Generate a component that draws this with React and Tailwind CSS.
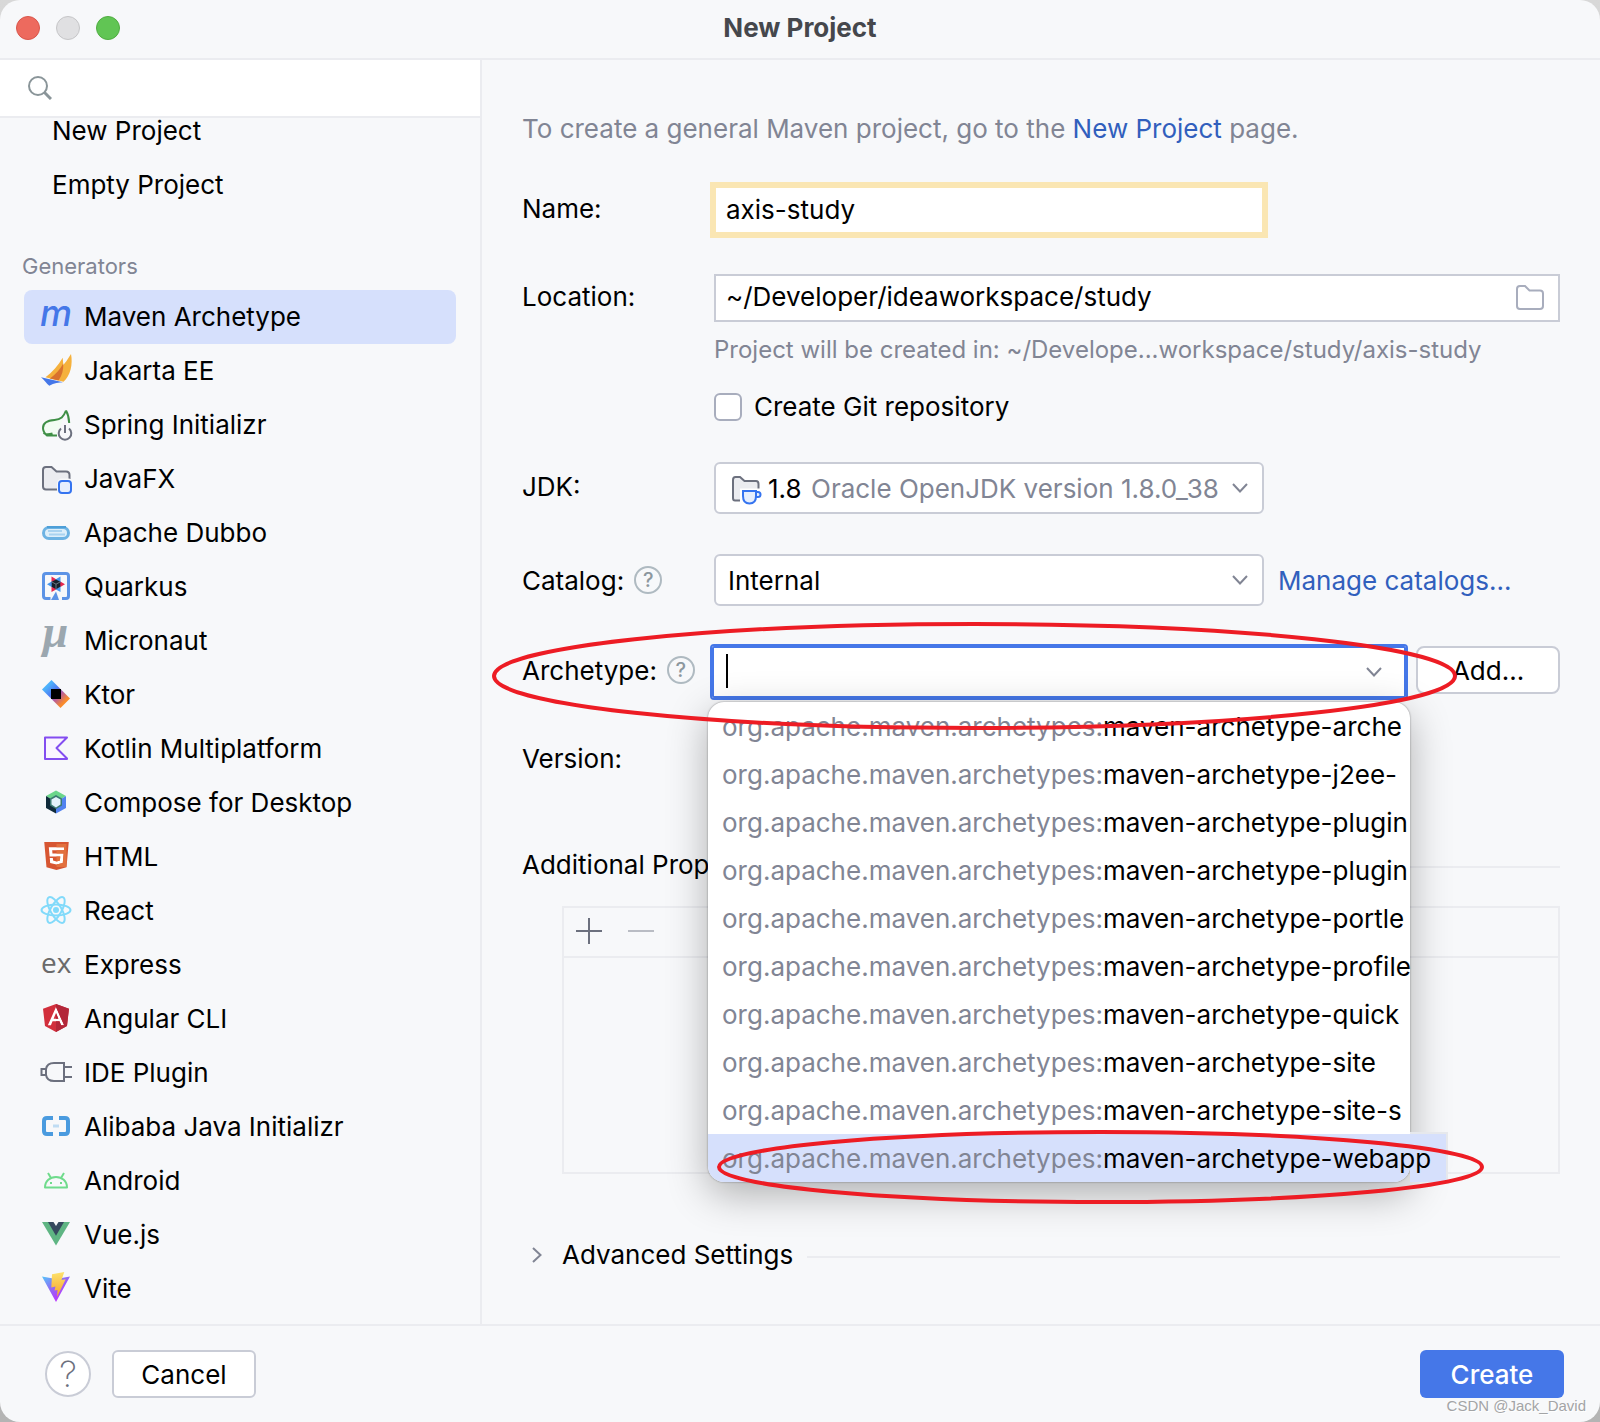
import React, { useState } from "react";
import { FaAngular } from "react-icons/fa";
import { SiHtml5 } from "react-icons/si";

// --- Generator icons ---
const Icon = ({ children }) => (
  <svg viewBox="0 0 32 32" className="size-8 shrink-0 overflow-visible" fill="none" aria-hidden="true">
    {children}
  </svg>
);

const MavenIcon = () => (
  <Icon>
    <text x="0" y="25" fontFamily="Inter, sans-serif" fontStyle="italic" fontWeight="500" fontSize="36" fill="#4577e8">m</text>
  </Icon>
);

const JakartaIcon = () => (
  <Icon>
    <path d="M31 -1C33 9 30.500 21 23.500 26.700L10 23.500C18 17 25 9 31 -1Z" fill="#f5b13d" />
    <path d="M22.700 2.700L23.300 10L12 24L5.500 22.300C12 17 18.500 10.500 22.700 2.700Z" fill="#f5b13d" />
    <path d="M23.300 8.500C23.500 15 22 21 18.500 25.500L10 23.500C15.500 19.500 20 14.500 23.300 8.500Z" fill="#d9722e" />
    <path d="M1 22.300L23 27.300C19 27.500 14 28 9.300 30.800C6.500 28.500 4.500 25.500 1 22.300Z" fill="#4577e8" />
  </Icon>
);

const SpringIcon = () => (
  <Icon>
    <path
      d="M26 1.500C23.500 8 21 10.500 14.500 11C6.500 11.500 3 14 3 19C3 22 4.500 24.500 7 26.500H17M26 1.500C28 5 29 9 29.200 14M3.500 24C6 26 9 25.500 12.500 24.500"
      stroke="#3f8f46"
      strokeWidth="2"
      fill="#f2fcf3"
    />
    <circle cx="25" cy="24.500" r="8" fill="#f7f8fa" />
    <path d="M21 19.500A6.300 6.300 0 1 0 29 19.500M25 16V24" stroke="#6c707e" strokeWidth="2" />
  </Icon>
);

const JavaFxIcon = () => (
  <Icon>
    <path
      d="M18 26.500H6Q3 26.500 3 23.500V7Q3 4 6 4H11.500L16.500 8.500H26Q29.500 8.500 29.500 12V16"
      stroke="#6c707e"
      strokeWidth="2"
      fill="#ebecf0"
    />
    <rect x="17" y="15.500" width="16" height="16" rx="5" fill="#f7f8fa" />
    <rect x="19" y="18" width="12" height="12" rx="3" fill="#e7effd" stroke="#3574f0" strokeWidth="2" />
  </Icon>
);

const DubboIcon = () => (
  <Icon>
    <rect x="3.500" y="10.500" width="25" height="11" rx="5.500" fill="#ddeffa" stroke="#6db3e3" strokeWidth="3" />
    <path d="M8 14H22M9 17.500H25" stroke="#a9d3f0" strokeWidth="2" />
    <path d="M7 10H26" stroke="#4d9fd8" strokeWidth="2" />
  </Icon>
);

const QuarkusIcon = () => (
  <Icon>
    <path d="M10.500 27.500H6Q3.500 27.500 3.500 25V5Q3.500 2.500 6 2.500H26Q28.500 2.500 28.500 5V25Q28.500 27.500 26 27.500H22" stroke="#5c93e6" strokeWidth="3" />
    <path d="M11 29L16 20.500L19 29Z" fill="#5c93e6" />
    <path d="M11.500 5.500L17 8.700L11.500 12ZM25 13.300L19.500 10V16.600ZM11.500 21V14.600L17 18Z" fill="#e8284f" />
    <path d="M20.500 5.500L15 8.700L20.500 12ZM7 13.300L12.500 10V16.600ZM20.500 21V14.600L15 18Z" fill="#4695eb" />
    <path d="M16 8.500L20.300 10.800V15.800L16 18.300L11.700 15.800V10.800Z" fill="#15202b" />
    <path d="M12 11L16 13.200L20 11M16 13.200V18" stroke="#7f8b99" strokeWidth="0.800" />
  </Icon>
);

const MicronautIcon = () => (
  <Icon>
    <text x="2" y="22" fontFamily="Liberation Serif, serif" fontStyle="italic" fontWeight="700" fontSize="46" fill="#9ba7af">µ</text>
  </Icon>
);

const KtorIcon = () => (
  <Icon>
    <defs>
      <linearGradient id="ktor" x1="4" y1="4" x2="27" y2="27" gradientUnits="userSpaceOnUse">
        <stop offset="0.150" stopColor="#4db1fb" />
        <stop offset="0.400" stopColor="#4f7bf2" />
        <stop offset="0.600" stopColor="#b45ba0" />
        <stop offset="0.850" stopColor="#f98b2c" />
      </linearGradient>
    </defs>
    <path d="M11.500 1L30 19.500L20.500 29L2 10.500Z" fill="url(#ktor)" />
    <rect x="11" y="10" width="10" height="10" fill="#000" />
  </Icon>
);

const KotlinIcon = () => (
  <Icon>
    <path d="M5 4.500H27L16.500 15L27 25.500V26H5Z" stroke="#834df0" strokeWidth="2" strokeLinejoin="round" fill="#faf5ff" />
  </Icon>
);

const ComposeIcon = () => (
  <Icon>
    <path d="M16 3.500L26 9L16 15L6 9Z" fill="#6bd68b" />
    <path d="M26 9V21L16 26.500V15Z" fill="#5283f0" />
    <path d="M6 9L16 15V26.500L6 21Z" fill="#0f2a3a" />
    <path d="M16 8L22 11.500V18.500L16 22L10 18.500V11.500Z" fill="#3c7a72" />
    <path d="M16 10L20.500 12.500V17.500L16 20.500L11.500 17.500V12.500Z" fill="#e4f2fb" />
  </Icon>
);

const HtmlIcon = () => (
  <Icon>
    <defs>
      <clipPath id="html-right"><rect x="16.500" y="3" width="10" height="23" /></clipPath>
    </defs>
    <path d="M8 6H25L23 23L16.500 26L10 23Z" fill="#fff" />
    <SiHtml5 x="2.500" y="1" size="28" color="#d75632" />
    <g clipPath="url(#html-right)">
      <SiHtml5 x="2.500" y="1" size="28" color="#e2703d" />
    </g>
  </Icon>
);

const ReactIcon = () => (
  <Icon>
    <g stroke="#82dafa" strokeWidth="2">
      <ellipse cx="16" cy="15" rx="14.500" ry="5.500" />
      <ellipse cx="16" cy="15" rx="14.500" ry="5.500" transform="rotate(60 16 15)" />
      <ellipse cx="16" cy="15" rx="14.500" ry="5.500" transform="rotate(120 16 15)" />
    </g>
    <circle cx="16" cy="15" r="3" fill="#82dafa" />
  </Icon>
);

const ExpressIcon = () => (
  <Icon>
    <text x="1" y="24" fontFamily="Open Sans, sans-serif" fontSize="28" fill="#6a6a6a">ex</text>
  </Icon>
);

const AngularIcon = () => (
  <Icon>
    <defs>
      <clipPath id="ng-right"><rect x="16" y="-2" width="18" height="36" /></clipPath>
    </defs>
    <path d="M8 4H24V23H8Z" fill="#fff" />
    <FaAngular x="0" y="-1" size="32" color="#d22f3c" />
    <g clipPath="url(#ng-right)">
      <FaAngular x="0" y="-1" size="32" color="#b32739" />
    </g>
  </Icon>
);

const PluginIcon = () => (
  <Icon>
    <path
      d="M6 12H1.500V18H6M24 10H32M24 20H32M24 6H14Q7 6 6 12V18Q7 24 14 24H24Z"
      stroke="#6c707e"
      strokeWidth="2"
      fill="#f7f8fa"
    />
  </Icon>
);

const AlibabaIcon = () => (
  <Icon>
    <path d="M13 7H7Q4 7 4 10V20Q4 23 7 23H13M19 7H25Q28 7 28 10V20Q28 23 25 23H19" stroke="#4a9bdf" strokeWidth="4" />
    <path d="M13 15H19" stroke="#bfdcf3" strokeWidth="3" />
  </Icon>
);

const AndroidIcon = () => (
  <Icon>
    <path
      d="M5 22.500C5 16 10 12 16 12S27 16 27 22.500ZM8 8L11 13M24 8L21 13"
      stroke="#6fdb8c"
      strokeWidth="2"
      strokeLinejoin="round"
    />
    <path d="M10 17H12V19H10ZM20 17H22V19H20Z" fill="#6fdb8c" />
  </Icon>
);

const VueIcon = () => (
  <Icon>
    <path d="M2 3H30L16 26.500Z" fill="#5fb583" />
    <path d="M8 3H24L16 16.700Z" fill="#35495e" />
    <path d="M13.500 3H18.500L16 7Z" fill="#f7f8fa" />
  </Icon>
);

const ViteIcon = () => (
  <Icon>
    <defs>
      <linearGradient id="vite" x1="3" y1="3" x2="20" y2="27" gradientUnits="userSpaceOnUse">
        <stop stopColor="#54c5fb" />
        <stop offset="0.500" stopColor="#8f6bf5" />
        <stop offset="1" stopColor="#bd34fe" />
      </linearGradient>
      <linearGradient id="bolt" x1="17" y1="0" x2="18" y2="23" gradientUnits="userSpaceOnUse">
        <stop stopColor="#fde06a" />
        <stop offset="1" stopColor="#f5a52e" />
      </linearGradient>
    </defs>
    <path d="M2 3.500L16 6L30 3.500L16 29Z" fill="url(#vite)" />
    <path d="M12 1.300L24.300 -1L21.500 7L25.700 6.300L17 24L17.500 17L14.500 17.500L15.500 13.500L11.300 14.500Z" fill="url(#bolt)" />
  </Icon>
);

const generators = [
  { name: "Maven Archetype", icon: MavenIcon },
  { name: "Jakarta EE", icon: JakartaIcon },
  { name: "Spring Initializr", icon: SpringIcon },
  { name: "JavaFX", icon: JavaFxIcon },
  { name: "Apache Dubbo", icon: DubboIcon },
  { name: "Quarkus", icon: QuarkusIcon },
  { name: "Micronaut", icon: MicronautIcon },
  { name: "Ktor", icon: KtorIcon },
  { name: "Kotlin Multiplatform", icon: KotlinIcon },
  { name: "Compose for Desktop", icon: ComposeIcon },
  { name: "HTML", icon: HtmlIcon },
  { name: "React", icon: ReactIcon },
  { name: "Express", icon: ExpressIcon },
  { name: "Angular CLI", icon: AngularIcon },
  { name: "IDE Plugin", icon: PluginIcon },
  { name: "Alibaba Java Initializr", icon: AlibabaIcon },
  { name: "Android", icon: AndroidIcon },
  { name: "Vue.js", icon: VueIcon },
  { name: "Vite", icon: ViteIcon },
];

const groupId = "org.apache.maven.archetypes:";
const archetypes = ["arche", "j2ee-", "plugin", "plugin", "portle", "profile", "quick", "site", "site-s"];

// --- Small parts ---
const Chevron = ({ className }) => (
  <svg viewBox="0 0 16 10" fill="none" className={`pointer-events-none absolute top-1/2 h-[10px] w-4 -translate-y-1/2 ${className}`} aria-hidden="true">
    <path d="M1 1L8 8.500L15 1" stroke="#818594" strokeWidth="2" />
  </svg>
);

const HelpButton = ({ label }) => (
  <button type="button" aria-label={label} className="flex size-7 items-center justify-center rounded-full border-2 border-[#afbac1] text-xl font-medium text-[#8c979e]">
    ?
  </button>
);

const RedOval = ({ className }) => (
  <svg className={`pointer-events-none absolute z-20 overflow-visible ${className}`} fill="none" aria-hidden="true">
    <ellipse cx="50%" cy="50%" rx="50%" ry="50%" stroke="#ed1c24" strokeWidth="4" />
  </svg>
);

const Sidebar = ({ selected, onSelect }) => (
  <aside className="w-[482px] shrink-0 border-r-2 border-[#ebecf0]">
    <label className="flex h-[58px] items-center gap-3 border-b-2 border-[#ebecf0] bg-white px-7">
      <svg viewBox="0 0 24 24" fill="none" className="size-6 shrink-0" aria-hidden="true">
        <circle cx="10" cy="10" r="9" stroke="#8a9599" strokeWidth="2" />
        <path d="M16.500 16.500L23 23" stroke="#8a9599" strokeWidth="3" />
      </svg>
      <input type="search" aria-label="Search" className="min-w-0 flex-1 outline-none" />
    </label>
    <nav className="px-6">
      <button type="button" className="flex h-10 w-full items-start px-7 leading-[26px]">New Project</button>
      <button type="button" className="flex h-[54px] w-full items-center px-7">Empty Project</button>
      <h2 className="-ml-0.5 mt-10 h-[38px] text-[22px] leading-7 text-[#818594]">Generators</h2>
      <ul className="pb-2">
        {generators.map(({ name, icon: GenIcon }) => (
          <li key={name}>
            <button
              type="button"
              onClick={() => onSelect(name)}
              className={`flex h-[54px] w-full items-center gap-3 rounded-lg px-4 ${selected === name ? "bg-[#d6e0fc]" : ""}`}
            >
              <GenIcon />
              {name}
            </button>
          </li>
        ))}
      </ul>
    </nav>
  </aside>
);

const ArchetypePopup = () => (
  <div className="absolute -left-1 -right-1 top-14 z-10">
    <ul role="listbox" aria-label="Archetypes" className="rounded-2xl bg-white shadow-[0_0_2px_rgba(0,0,0,0.45),0_12px_40px_rgba(0,0,0,0.3)]">
      {archetypes.map((a, i) => (
        <li key={i} role="option" aria-selected="false" className="flex h-12 items-center whitespace-nowrap px-[14px] pt-0.5">
          <span className="text-[#818594]">{groupId}</span>maven-archetype-{a}
        </li>
      ))}
      <li role="option" aria-selected="true" className="relative flex h-12 items-center whitespace-nowrap rounded-b-2xl bg-[#d6e0fc] px-[14px] pt-0.5">
        {/* tail of the row that is wider than the list */}
        <span className="absolute -top-0.5 bottom-0 left-full w-[38px] border-r-2 border-t-2 border-[#e6e8ec] bg-[#d6e0fc]" />
        <span className="relative text-[#818594]">{groupId}</span>
        <span className="relative">maven-archetype-webapp</span>
      </li>
    </ul>
    <RedOval className="bottom-[-20px] left-[11px] h-[70px] w-[calc(100%+61px)]" />
  </div>
);

export default function App() {
  const [selected, setSelected] = useState("Maven Archetype");
  const [name, setName] = useState("axis-study");
  const [location, setLocation] = useState("~/Developer/ideaworkspace/study");

  return (
    <div className="min-h-screen bg-linear-to-b from-[#d8d8d8] to-[#b4b4b4] font-['Inter',sans-serif] text-[26px] leading-[34px] text-black">
      <div className="relative flex min-h-screen flex-col rounded-[20px] bg-[#f7f8fa]">
        <header className="grid h-[60px] grid-cols-3 items-center border-b-2 border-[#ebecf0] px-4 pb-0.5">
          <div className="flex gap-4">
            <button type="button" aria-label="Close" className="size-6 rounded-full border border-[#d9564b] bg-[#ed6a5e]" />
            <button type="button" aria-label="Minimize" className="size-6 rounded-full border border-[#c6c6c8] bg-[#e0e0e2]" />
            <button type="button" aria-label="Zoom" className="size-6 rounded-full border border-[#50ad41] bg-[#61c554]" />
          </div>
          <h1 className="text-center font-bold text-[#45474c]">New Project</h1>
        </header>

        <div className="flex flex-1">
          <Sidebar selected={selected} onSelect={setSelected} />

          <main className="min-w-0 flex-1 px-10 pt-[52px]">
            <p className="text-[#818594]">
              To create a general Maven project, go to the <a href="#new" className="text-[#315fbd]">New Project</a> page.
            </p>

            <div className="mt-10 grid grid-cols-[192px_minmax(0,1fr)] items-center">
              <label htmlFor="name" className="pb-0.5">Name:</label>
              <input
                id="name"
                value={name}
                onChange={(e) => setName(e.target.value)}
                className="h-12 w-[550px] border-2 border-[#fae6b3] bg-white px-[10px] pb-0.5 outline-4 outline-[#fae6b3]"
              />
            </div>

            <div className="mt-10 grid grid-cols-[192px_minmax(0,1fr)] items-center">
              <label htmlFor="location" className="pb-0.5">Location:</label>
              <div className="flex h-12 items-center border-2 border-[#c9ccd6] bg-white pl-[10px] pr-3">
                <input id="location" value={location} onChange={(e) => setLocation(e.target.value)} className="min-w-0 flex-1 pb-0.5 outline-none" />
                <button type="button" aria-label="Browse">
                  <svg viewBox="0 0 32 32" fill="none" className="size-8">
                    <path d="M3 7Q3 4 6 4H11L15.500 8.500H26Q29 8.500 29 11.500V24Q29 27 26 27H6Q3 27 3 24Z" stroke="#a8adbd" strokeWidth="2" />
                  </svg>
                </button>
              </div>
            </div>

            <div className="pl-48">
              <p className="mt-3 truncate text-2xl text-[#818594]">
                Project will be created in: ~/Develope...workspace/study/axis-study
              </p>
              <label className="mt-6 flex w-fit items-center gap-3">
                <input type="checkbox" className="size-7 appearance-none rounded-md border-2 border-[#a8adbd] bg-white checked:bg-[#4577e8]" />
                Create Git repository
              </label>
            </div>

            <div className="mt-[38px] grid grid-cols-[192px_minmax(0,1fr)] items-center">
              <label htmlFor="jdk" className="pb-0.5">JDK:</label>
              <div className="relative w-[550px]">
                <select id="jdk" className="h-[52px] w-full appearance-none rounded-md border-2 border-[#c9ccd6] bg-white pl-[95px] pr-[44px] pt-0.5 text-[#818594]">
                  <option>Oracle OpenJDK version 1.8.0_381</option>
                </select>
                <div className="pointer-events-none absolute inset-y-0 left-4 flex items-center gap-1.5 pt-0.5">
                  <svg viewBox="0 0 32 32" fill="none" className="size-8" aria-hidden="true">
                    <path d="M10 27.500H5Q3 27.500 3 25V7Q3 4 5.500 4H10L14.500 8H26Q28.500 8 28.500 11V16" stroke="#6c707e" strokeWidth="2" fill="#ebecf0" />
                    <path d="M10 15.500H32V29H10Z" fill="#fff" />
                    <path d="M13 18H26V23Q26 30.500 19.500 30.500T13 23ZM26 19H28Q30.500 19 30.500 21.500T28 24H25.500" stroke="#3574f0" strokeWidth="2" fill="#e7effd" />
                  </svg>
                  <span>1.8</span>
                </div>
                <Chevron className="right-4" />
              </div>
            </div>

            <div className="mt-10 grid grid-cols-[192px_minmax(0,1fr)] items-center">
              <div className="flex items-center gap-[10px]">
                <label htmlFor="catalog" className="pt-0.5">Catalog:</label>
                <HelpButton label="Catalog help" />
              </div>
              <div className="flex items-center gap-[14px]">
                <div className="relative w-[550px]">
                  <select id="catalog" className="h-[52px] w-full appearance-none rounded-md border-2 border-[#c9ccd6] bg-white px-3 pt-0.5">
                    <option>Internal</option>
                  </select>
                  <Chevron className="right-4" />
                </div>
                <a href="#catalogs" className="pt-0.5 text-[#315fbd]">Manage catalogs...</a>
              </div>
            </div>

            <div className="relative mt-10 grid grid-cols-[192px_minmax(0,1fr)] items-start">
              <div className="flex h-12 items-center gap-[10px]">
                <label htmlFor="archetype" className="pt-0.5">Archetype:</label>
                <HelpButton label="Archetype help" />
              </div>
              <div className="-ml-0.5 flex items-start gap-[10px]">
                <div className="relative min-w-0 flex-1">
                  <input
                    id="archetype"
                    role="combobox"
                    aria-expanded="true"
                    className="block h-[52px] w-full rounded-xs border-2 border-[#4577e8] bg-white px-3 outline-2 outline-[#4577e8]"
                  />
                  <span className="absolute left-[14px] top-2 h-[34px] w-0.5 bg-black" />
                  <Chevron className="right-6" />
                  <ArchetypePopup />
                </div>
                <button type="button" className="h-12 w-36 rounded-lg border-2 border-[#c9ccd6] bg-white pt-0.5">Add...</button>
              </div>
              <RedOval className="-left-7 -top-[22px] h-[104px] w-[calc(100%-77px)]" />
            </div>

            <div className="mt-11">Version:</div>

            <div className="mt-[72px] flex items-center gap-[14px]">
              <h2>Additional Properties</h2>
              <div className="mt-1 h-0.5 flex-1 bg-[#ebecf0]" />
            </div>
            <div className="ml-10 mt-6 h-[268px] border-2 border-[#ebecf0]">
              <div className="flex h-[50px] items-center gap-5 border-b-2 border-[#ebecf0] px-[9px] pb-0.5">
                <button type="button" aria-label="Add property">
                  <svg viewBox="0 0 32 32" fill="none" className="size-8">
                    <path d="M16 3V29M3 16H29" stroke="#6c707e" strokeWidth="2" />
                  </svg>
                </button>
                <button type="button" aria-label="Remove property">
                  <svg viewBox="0 0 32 32" fill="none" className="size-8">
                    <path d="M3 16H29" stroke="#b9bcc4" strokeWidth="2" />
                  </svg>
                </button>
              </div>
            </div>

            <div className="mt-16 flex items-center gap-[14px] pl-[10px]">
              <button type="button" className="flex items-center gap-5">
                <svg viewBox="0 0 10 16" fill="none" className="h-4 w-[10px]" aria-hidden="true">
                  <path d="M1 1L8.500 8L1 15" stroke="#818594" strokeWidth="2" />
                </svg>
                Advanced Settings
              </button>
              <div className="mt-1 h-0.5 flex-1 bg-[#ebecf0]" />
            </div>
          </main>
        </div>

        <footer className="flex h-[98px] items-center gap-[21px] border-t-2 border-[#ebecf0] pl-[45px] pr-9">
          <button type="button" aria-label="Help" className="flex size-[46px] items-center justify-center rounded-full border-2 border-[#c9ccd6] bg-white text-4xl font-extralight text-[#6c707e]">
            ?
          </button>
          <button type="button" className="h-12 w-36 rounded-md border-2 border-[#c9ccd6] bg-white pt-0.5">Cancel</button>
          <button type="button" className="ml-auto h-12 w-36 rounded-md bg-[#4577e8] pt-0.5 font-medium text-white">Create</button>
        </footer>
        <span className="absolute bottom-1 right-[14px] font-['Liberation_Sans',sans-serif] text-[15px] leading-6 text-[#a3a4a6] [text-shadow:1px_1px_0_#fff]">
          CSDN @Jack_David
        </span>
      </div>
    </div>
  );
}
